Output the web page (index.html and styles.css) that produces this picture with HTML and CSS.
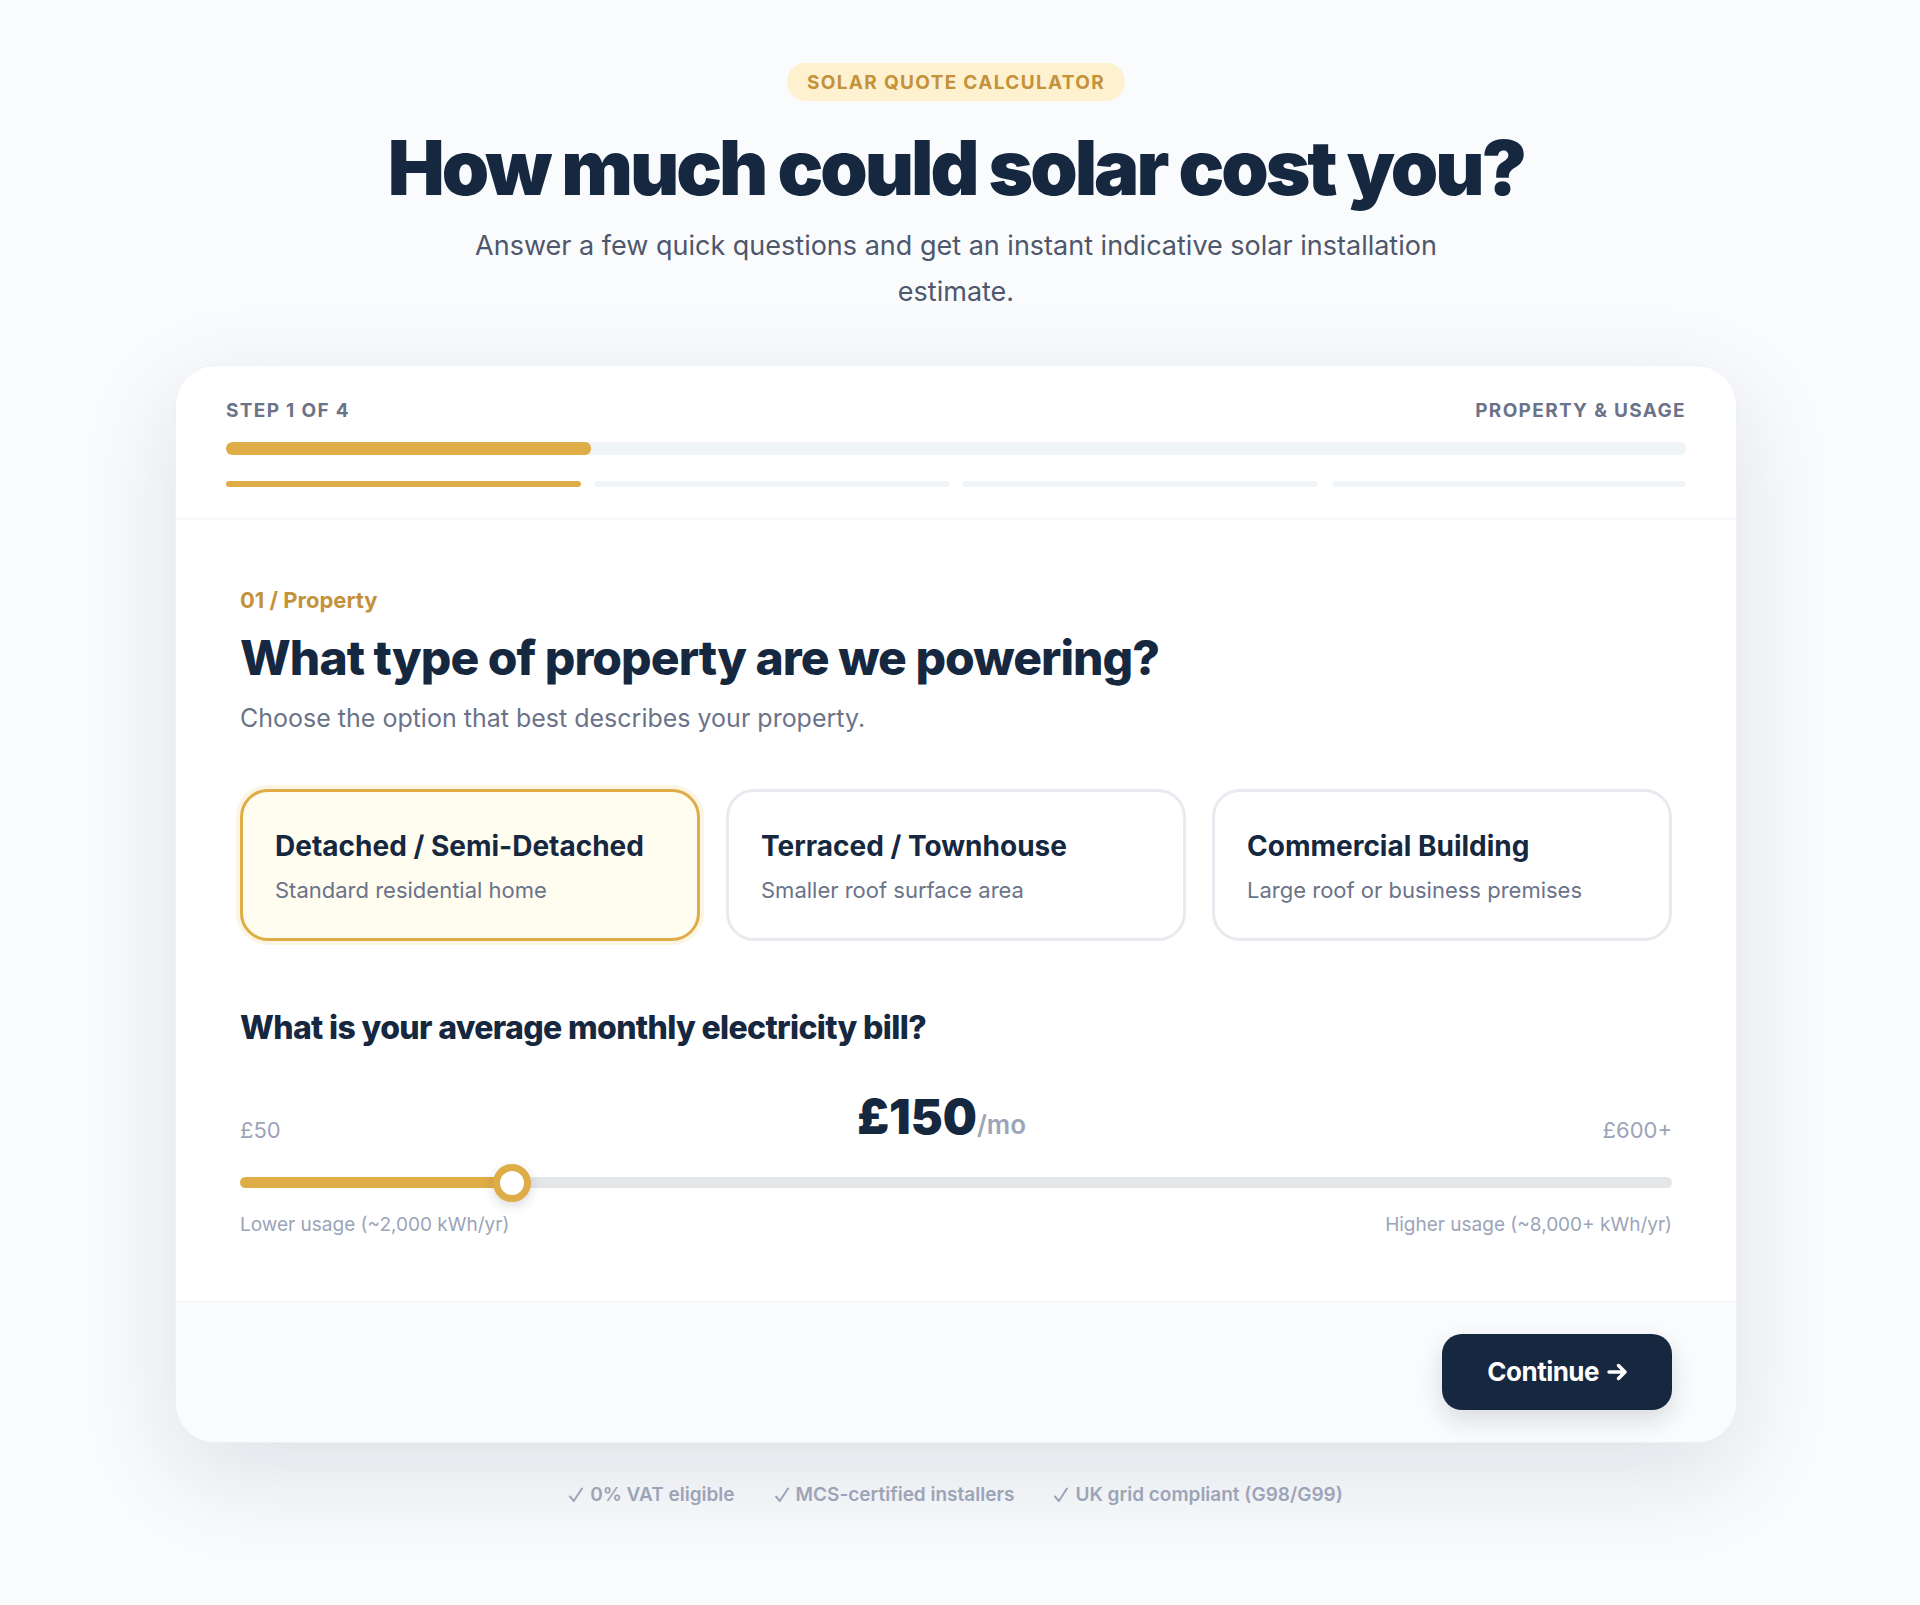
FILE: index.html
```
<!DOCTYPE html>
<html lang="en">
<head>
  <meta charset="UTF-8" />
  <meta name="viewport" content="width=device-width, initial-scale=1" />
  <title>Solar Quote Calculator</title>
  <link rel="stylesheet" href="styles.css">
</head>
<body>
  <main class="page">
    <header class="hero">
      <span class="badge">Solar Quote Calculator</span>
      <h1>How much could solar cost you?</h1>
      <p>Answer a few quick questions and get an instant indicative solar installation estimate.</p>
    </header>

    <form class="card" id="quoteForm">
      <div class="card-top">
        <div class="step-labels">
          <span>Step 1 of 4</span>
          <span>Property &amp; Usage</span>
        </div>
        <div class="progress"><div class="progress-fill" style="width: 25%"></div></div>
        <div class="segments">
          <span class="segment active"></span>
          <span class="segment"></span>
          <span class="segment"></span>
          <span class="segment"></span>
        </div>
      </div>

      <div class="card-body">
        <p class="eyebrow">01 / Property</p>
        <h2>What type of property are we powering?</h2>
        <p class="hint">Choose the option that best describes your property.</p>

        <div class="options">
          <button type="button" class="option selected" aria-pressed="true">
            <span class="option-title">Detached / Semi-Detached</span>
            <span class="option-text">Standard residential home</span>
          </button>
          <button type="button" class="option" aria-pressed="false">
            <span class="option-title">Terraced / Townhouse</span>
            <span class="option-text">Smaller roof surface area</span>
          </button>
          <button type="button" class="option" aria-pressed="false">
            <span class="option-title">Commercial Building</span>
            <span class="option-text">Large roof or business premises</span>
          </button>
        </div>

        <label class="question" for="bill">What is your average monthly electricity bill?</label>
        <div class="bill-row">
          <span>£50</span>
          <output class="bill" for="bill"><strong id="billValue">£150</strong><small>/mo</small></output>
          <span>£600+</span>
        </div>
        <input class="slider" type="range" id="bill" min="50" max="600" step="10" value="150" style="--fill: 19%">
        <div class="usage-row">
          <span>Lower usage (~2,000 kWh/yr)</span>
          <span>Higher usage (~8,000+ kWh/yr)</span>
        </div>
      </div>

      <div class="card-footer">
        <button type="submit" class="continue">
          Continue
          <svg width="20" height="20" viewBox="0 0 20 20" fill="none" stroke="currentColor" stroke-width="3.4" stroke-linecap="round" stroke-linejoin="round" aria-hidden="true"><path d="M2 10h16M11.5 3.500l6.500 6.500-6.500 6.500" /></svg>
        </button>
      </div>
    </form>

    <ul class="trust">
      <li><svg class="check" viewBox="0 0 14 16" aria-hidden="true"><path d="M1 9.500l3.800 4.500L13 1.500" /></svg>0% VAT eligible</li>
      <li><svg class="check" viewBox="0 0 14 16" aria-hidden="true"><path d="M1 9.500l3.800 4.500L13 1.500" /></svg>MCS-certified installers</li>
      <li><svg class="check" viewBox="0 0 14 16" aria-hidden="true"><path d="M1 9.500l3.800 4.500L13 1.500" /></svg>UK grid compliant (G98/G99)</li>
    </ul>
  </main>

  <script>
    const bill = document.getElementById("bill");
    const options = document.querySelectorAll(".option");

    // Keep the gold part of the track in step with the thumb
    bill.addEventListener("input", function() {
      const percent = (bill.value - bill.min) / (bill.max - bill.min) * 100;
      bill.style.setProperty("--fill", percent + "%");
      document.getElementById("billValue").textContent = "£" + bill.value;
    });

    options.forEach(function(option) {
      option.addEventListener("click", function() {
        options.forEach(function(o) {
          o.classList.toggle("selected", o === option);
          o.setAttribute("aria-pressed", o === option);
        });
      });
    });

    document.getElementById("quoteForm").addEventListener("submit", function(event) {
      event.preventDefault();
    });
  </script>
</body>
</html>
```
FILE: styles.css
```
* { box-sizing: border-box; }
body { margin: 0; font-family: Inter, "Liberation Sans", sans-serif; font-size: 19px; line-height: 24px; color: #162840; background: #f9fbfd; }
h1, h2, p, ul { margin: 0; }
button { font-family: inherit; cursor: pointer; }

.page { max-width: 1618px; margin: 0 auto; padding: 63px 32px 80px 24px; }

.hero { text-align: center; margin-bottom: 50px; }
.badge { display: inline-block; padding: 8px 20px 6px; border-radius: 20px; background: #fef1cf; color: #c4923a; font-weight: 700; letter-spacing: 0.07em; text-transform: uppercase; }
.hero h1 { margin: 24px 0 14px; font-size: 76px; line-height: 84px; font-weight: 900; letter-spacing: -0.04em; }
.hero p { max-width: 1000px; margin: 0 auto; font-size: 27px; line-height: 46px; color: #4e576b; }

.card { border: 1px solid #eef1f4; border-radius: 40px; background: #fff; overflow: hidden; box-shadow: 0 30px 100px rgba(22, 32, 56, 0.12); }
.card-top { padding: 33px 50px 31px; border-bottom: 2px solid #f8f9fb; }
.step-labels { display: flex; justify-content: space-between; margin-bottom: 19px; color: #6b7389; font-weight: 700; letter-spacing: 0.07em; text-transform: uppercase; }
.progress { height: 13px; border-radius: 6px; background: #eff4f7; overflow: hidden; }
.progress-fill { height: 100%; border-radius: 6px; background: #dfad47; }
.segments { display: grid; grid-template-columns: repeat(4, 1fr); gap: 14px; margin-top: 26px; }
.segment { height: 6px; border-radius: 3px; background: #f2f5f8; }
.segment.active { background: #dfad47; }

.card-body { padding: 64px; }
.eyebrow { font-size: 22px; line-height: 32px; font-weight: 700; color: #c4923a; }
.card-body h2 { margin: 12px 0; font-size: 48px; line-height: 60px; font-weight: 800; letter-spacing: -0.02em; }
.hint { font-size: 25px; line-height: 36px; color: #6b7389; }

.options { display: grid; grid-template-columns: repeat(3, 1fr); gap: 26px; margin: 53px 0 67px; }
.option { display: flex; flex-direction: column; gap: 9px; padding: 34px 32px 33px; border: 3px solid #e8eaf0; border-radius: 28px; background: #fff; color: inherit; text-align: left; }
.option.selected { border-color: #dfad47; background: #fffcf0; box-shadow: 0 0 0 4px #fdf5e3; }
.option-title { font-size: 28px; line-height: 40px; font-weight: 700; }
.option-text { font-size: 22px; line-height: 30px; color: #6b7389; }

.question { display: block; font-size: 32px; line-height: 40px; font-weight: 800; letter-spacing: -0.02em; }
.bill-row { display: flex; justify-content: space-between; align-items: flex-end; margin: 41px 0 32px; font-size: 22px; line-height: 30px; color: #9ca4b8; }
.bill strong { font-size: 48px; line-height: 56px; font-weight: 900; color: #162840; }
.bill small { font-size: 26px; font-weight: 600; }

.slider { -webkit-appearance: none; appearance: none; display: block; width: 100%; height: 11px; margin: 0; border-radius: 6px; background: linear-gradient(to right, #dfad47 var(--fill), #e5e6e8 var(--fill)); }
.slider::-webkit-slider-thumb { -webkit-appearance: none; width: 38px; height: 38px; border: 7px solid #dfad47; border-radius: 50%; background: #fff; box-shadow: 0 4px 12px rgba(22, 32, 56, 0.16); }
.usage-row { display: flex; justify-content: space-between; margin-top: 25px; color: #9ca4b8; }

.card-footer { display: flex; justify-content: flex-end; padding: 32px 64px; border-top: 1px solid #f4f6f9; background: #f9fbfc; }
.continue { display: flex; align-items: center; gap: 8px; padding: 20px 45px; border: 0; border-radius: 20px; background: #162840; color: #fff; font-size: 26px; line-height: 36px; font-weight: 700; letter-spacing: -0.02em; box-shadow: 0 10px 24px rgba(22, 32, 56, 0.14); }

.trust { display: flex; justify-content: center; gap: 40px; margin-top: 40px; padding: 0; list-style: none; font-weight: 600; color: #9ca4b8; }
.trust li { display: flex; align-items: center; gap: 7px; }
.check { width: 14px; height: 16px; fill: none; stroke: currentColor; stroke-width: 2; stroke-linecap: round; stroke-linejoin: round; }

@media (max-width: 900px) {
  .hero h1 { font-size: 48px; line-height: 56px; }
  .options { grid-template-columns: 1fr; }
  .trust { flex-direction: column; align-items: center; gap: 12px; }
}
```
